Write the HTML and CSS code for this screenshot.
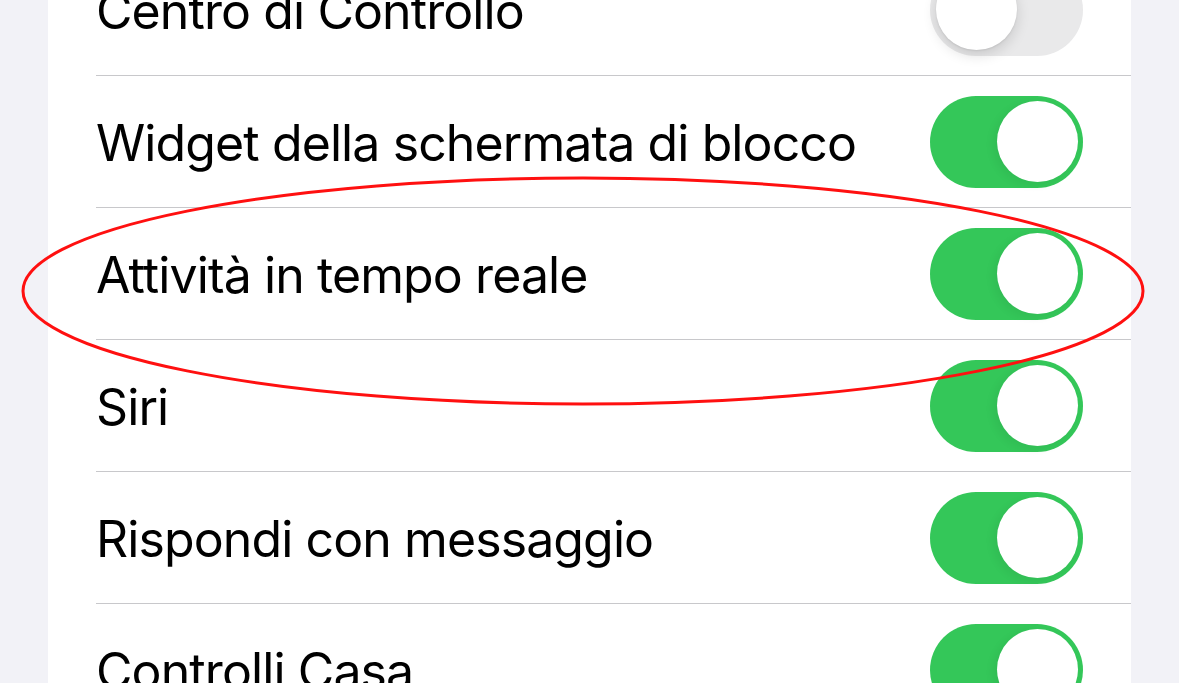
FILE: index.html
```html
<!DOCTYPE html>
<html lang="it">
<head>
  <meta charset="UTF-8" />
  <meta name="viewport" content="width=device-width, initial-scale=1.0" />
  <title>Consenti accesso se bloccato</title>
  <link rel="stylesheet" href="styles.css">
</head>
<body>

  <div class="group">
    <div class="row">
      <div class="row-inner">
        <span class="label">Centro di Controllo</span>
        <div class="switch"><div class="knob"></div></div>
      </div>
    </div>
    <div class="row">
      <div class="row-inner">
        <span class="label">Widget della schermata di blocco</span>
        <div class="switch on"><div class="knob"></div></div>
      </div>
    </div>
    <div class="row">
      <div class="row-inner">
        <span class="label">Attività in tempo reale</span>
        <div class="switch on"><div class="knob"></div></div>
      </div>
    </div>
    <div class="row">
      <div class="row-inner">
        <span class="label">Siri</span>
        <div class="switch on"><div class="knob"></div></div>
      </div>
    </div>
    <div class="row">
      <div class="row-inner">
        <span class="label">Rispondi con messaggio</span>
        <div class="switch on"><div class="knob"></div></div>
      </div>
    </div>
    <div class="row">
      <div class="row-inner">
        <span class="label">Controlli Casa</span>
        <div class="switch on"><div class="knob"></div></div>
      </div>
    </div>
  </div>

  <!-- hand drawn highlight -->
  <svg class="mark" viewBox="0 0 1179 683">
    <ellipse cx="583" cy="291" rx="560" ry="113" />
  </svg>

</body>
</html>
```

FILE: styles.css
```css
body {
  margin: 0;
  height: 683px;
  background: #f2f2f7;
  overflow: hidden;
  font-family: Inter, "Noto Sans", sans-serif;
  position: relative;
}

.group {
  margin: -56px 0 0 48px;
  width: 1083px;
  background: #fff;
}

.row {
  padding-left: 48px;
}

.row-inner {
  height: 131px;
  display: flex;
  align-items: center;
  justify-content: space-between;
  padding-right: 48px;
  border-bottom: 1px solid #c8c8cb;
}

.label {
  font-size: 50px;
  color: #000;
  letter-spacing: -0.9px;
  padding-top: 2px;
}

.switch {
  width: 153px;
  height: 92px;
  border-radius: 46px;
  background: #e9e9ea;
  position: relative;
  flex-shrink: 0;
}

.knob {
  position: absolute;
  top: 5.5px;
  left: 5.5px;
  width: 81px;
  height: 81px;
  border-radius: 50%;
  background: #fff;
  box-shadow: 0 5px 14px rgba(0, 0, 0, 0.14), 0 1px 2px rgba(0, 0, 0, 0.08);
}

.switch.on {
  background: #34c759;
}

.switch.on .knob {
  left: auto;
  right: 5.5px;
  box-shadow: -4px 3px 10px rgba(0, 0, 0, 0.06);
}

.mark {
  position: absolute;
  top: 0;
  left: 0;
  width: 1179px;
  height: 683px;
  pointer-events: none;
}

.mark ellipse {
  fill: none;
  stroke: #ff1010;
  stroke-width: 3;
}
```
